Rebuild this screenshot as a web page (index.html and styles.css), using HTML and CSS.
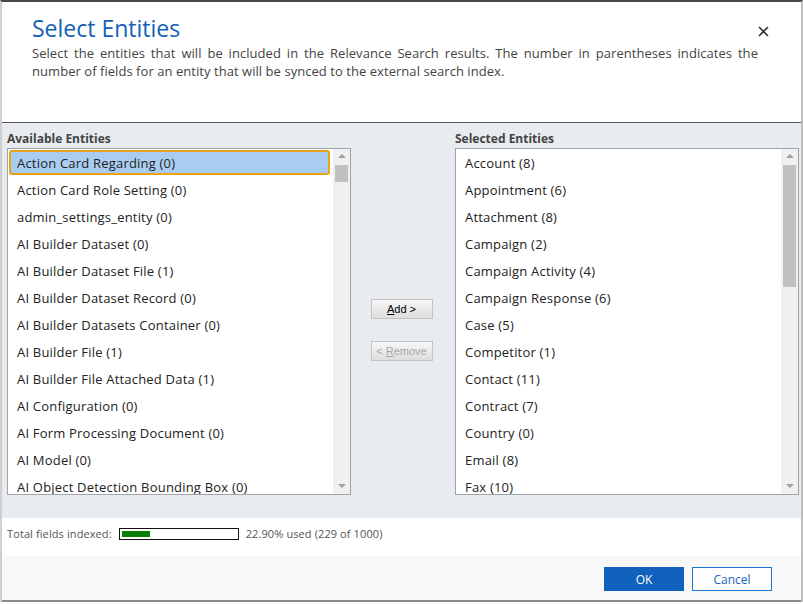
FILE: index.html
```html
<!DOCTYPE html>
<html>
<head>
<meta charset="utf-8">
<link rel="stylesheet" href="styles.css">
</head>
<body>
<div class="dialog">
  <header class="header">
    <h1 class="title">Select Entities</h1>
    <p class="desc">Select the entities that will be included in the Relevance Search results. The number in parentheses indicates the number of fields for an entity that will be synced to the external search index.</p>
    <button class="close" aria-label="Close">
      <svg width="11" height="11" viewBox="0 0 11 11"><path d="M1 1 L10 10 M10 1 L1 10" stroke="#333" stroke-width="1.6" fill="none"/></svg>
    </button>
  </header>
  <main class="main">
    <div class="col">
      <div class="label">Available Entities</div>
      <div class="listbox">
        <ul class="items">
          <li class="item selected">Action Card Regarding (0)</li>
          <li class="item">Action Card Role Setting (0)</li>
          <li class="item">admin_settings_entity (0)</li>
          <li class="item">AI Builder Dataset (0)</li>
          <li class="item">AI Builder Dataset File (1)</li>
          <li class="item">AI Builder Dataset Record (0)</li>
          <li class="item">AI Builder Datasets Container (0)</li>
          <li class="item">AI Builder File (1)</li>
          <li class="item">AI Builder File Attached Data (1)</li>
          <li class="item">AI Configuration (0)</li>
          <li class="item">AI Form Processing Document (0)</li>
          <li class="item">AI Model (0)</li>
          <li class="item">AI Object Detection Bounding Box (0)</li>
        </ul>
        <div class="scrollbar">
          <span class="arrow up"></span>
          <div class="track"><div class="thumb thumb-small"></div></div>
          <span class="arrow down"></span>
        </div>
      </div>
    </div>
    <div class="actions">
      <button class="btn-small"><u>A</u>dd &gt;</button>
      <button class="btn-small" disabled>&lt; <u>R</u>emove</button>
    </div>
    <div class="col">
      <div class="label">Selected Entities</div>
      <div class="listbox">
        <ul class="items">
          <li class="item">Account (8)</li>
          <li class="item">Appointment (6)</li>
          <li class="item">Attachment (8)</li>
          <li class="item">Campaign (2)</li>
          <li class="item">Campaign Activity (4)</li>
          <li class="item">Campaign Response (6)</li>
          <li class="item">Case (5)</li>
          <li class="item">Competitor (1)</li>
          <li class="item">Contact (11)</li>
          <li class="item">Contract (7)</li>
          <li class="item">Country (0)</li>
          <li class="item">Email (8)</li>
          <li class="item">Fax (10)</li>
        </ul>
        <div class="scrollbar">
          <span class="arrow up"></span>
          <div class="track"><div class="thumb thumb-large"></div></div>
          <span class="arrow down"></span>
        </div>
      </div>
    </div>
  </main>
  <div class="status">
    <span>Total fields indexed:</span>
    <div class="progress"><div class="fill" style="width:28px"></div></div>
    <span>22.90% used (229 of 1000)</span>
  </div>
  <footer class="footer">
    <button class="btn btn-primary">OK</button>
    <button class="btn btn-secondary">Cancel</button>
  </footer>
</div>
</body>
</html>
```
FILE: styles.css
```css
* { box-sizing: border-box; }
html, body { margin: 0; padding: 0; background: #ffffff; }
body { width: 803px; height: 604px; overflow: hidden; font-family: "Open Sans", "Liberation Sans", sans-serif; }

.dialog {
  width: 803px;
  height: 602px;
  border-top: 2px solid #4a4a4a;
  border-left: 2px solid #cfcfcf;
  border-right: 2px solid #bfbfbf;
  display: flex;
  flex-direction: column;
  background: #fff;
}

.header {
  position: relative;
  height: 121px;
  padding: 10px 43px 0 30px;
  border-bottom: 1px solid #5a5a5a;
  background: #fff;
}
.title {
  margin: 0;
  font-weight: 400;
  font-size: 23px;
  line-height: 32px;
  color: #1160b7;
}
.desc {
  margin: 0;
  font-size: 13px;
  letter-spacing: 0.05px;
  line-height: 18px;
  color: #444;
  text-align: justify;
}
.close {
  position: absolute;
  top: 22px;
  right: 31px;
  width: 14px;
  height: 14px;
  padding: 0;
  border: 0;
  background: transparent;
  display: flex;
  align-items: center;
  justify-content: center;
}

.main {
  background: #e8ebef;
  height: 395px;
  display: grid;
  grid-template-columns: 344px 104px 344px;
  padding: 4px 0 0 5px;
}
.label {
  font-size: 12px;
  font-weight: 700;
  color: #444;
  line-height: 24px;
  height: 21px;
}
.listbox {
  height: 347px;
  border: 1px solid #a0a4a8;
  background: #fff;
  display: flex;
  overflow: hidden;
}
.items {
  list-style: none;
  margin: 0;
  padding: 0;
  flex: 1;
  overflow: hidden;
}
.item {
  height: 27px;
  line-height: 29px;
  padding-left: 9px;
  font-size: 13px;
  letter-spacing: 0.2px;
  color: #222;
  white-space: nowrap;
}
.item.selected {
  margin: 1px 3px 1px 1px;
  height: 25px;
  line-height: 23px;
  padding-left: 6px;
  background: #a9cdf1;
  border: 2px solid #e9a21a;
  border-radius: 3px;
}
.scrollbar {
  width: 17px;
  background: #f0f0f0;
  display: flex;
  flex-direction: column;
  align-items: center;
}
.arrow {
  width: 0; height: 0;
  border-left: 4px solid transparent;
  border-right: 4px solid transparent;
  margin: 5px 0;
}
.arrow.up { border-bottom: 4px solid #a3a3a3; }
.arrow.down { border-top: 4px solid #a3a3a3; margin-bottom: 6px; }
.track { flex: 1; width: 100%; padding: 2px 2px 0 2px; }
.thumb { background: #c1c1c1; width: 100%; }
.thumb-small { height: 17px; }
.thumb-large { height: 122px; }

.actions {
  display: flex;
  flex-direction: column;
  align-items: center;
  padding-top: 172px;
  gap: 22px;
  padding-right: 3px;
}
.btn-small {
  width: 62px;
  height: 20px;
  padding: 0;
  font-family: "Liberation Sans", Arial, sans-serif;
  font-size: 11px;
  color: #000;
  border: 1px solid #c3c3c3;
  background: linear-gradient(#f7f7f7, #dddddd);
}
.btn-small:disabled { color: #a7a7a7; }

.status {
  height: 38px;
  background: #fff;
  display: flex;
  align-items: flex-start;
  gap: 7px;
  padding: 8px 0 0 5px;
  font-size: 11px;
  letter-spacing: 0.1px;
  line-height: 16px;
  color: #555;
}
.progress {
  width: 120px;
  height: 12px;
  margin-top: 2px;
  border: 1px solid #111;
  padding: 2px;
}
.fill { height: 100%; background: #0a7d0a; }

.footer {
  flex: 1;
  background: #f8f8f8;
  display: flex;
  justify-content: flex-end;
  align-items: flex-start;
  gap: 8px;
  padding: 11px 29px 0 0;
  border-bottom: 2px solid #8a8a8a;
}
.btn {
  width: 80px;
  height: 24px;
  font-family: "Open Sans", "Liberation Sans", sans-serif;
  font-size: 12px;
  padding: 0;
}
.btn-primary { background: #0f61bb; color: #fff; border: 1px solid #0f61bb; }
.btn-secondary { background: #fff; color: #1a66c0; border: 1px solid #1a73d0; }
```
